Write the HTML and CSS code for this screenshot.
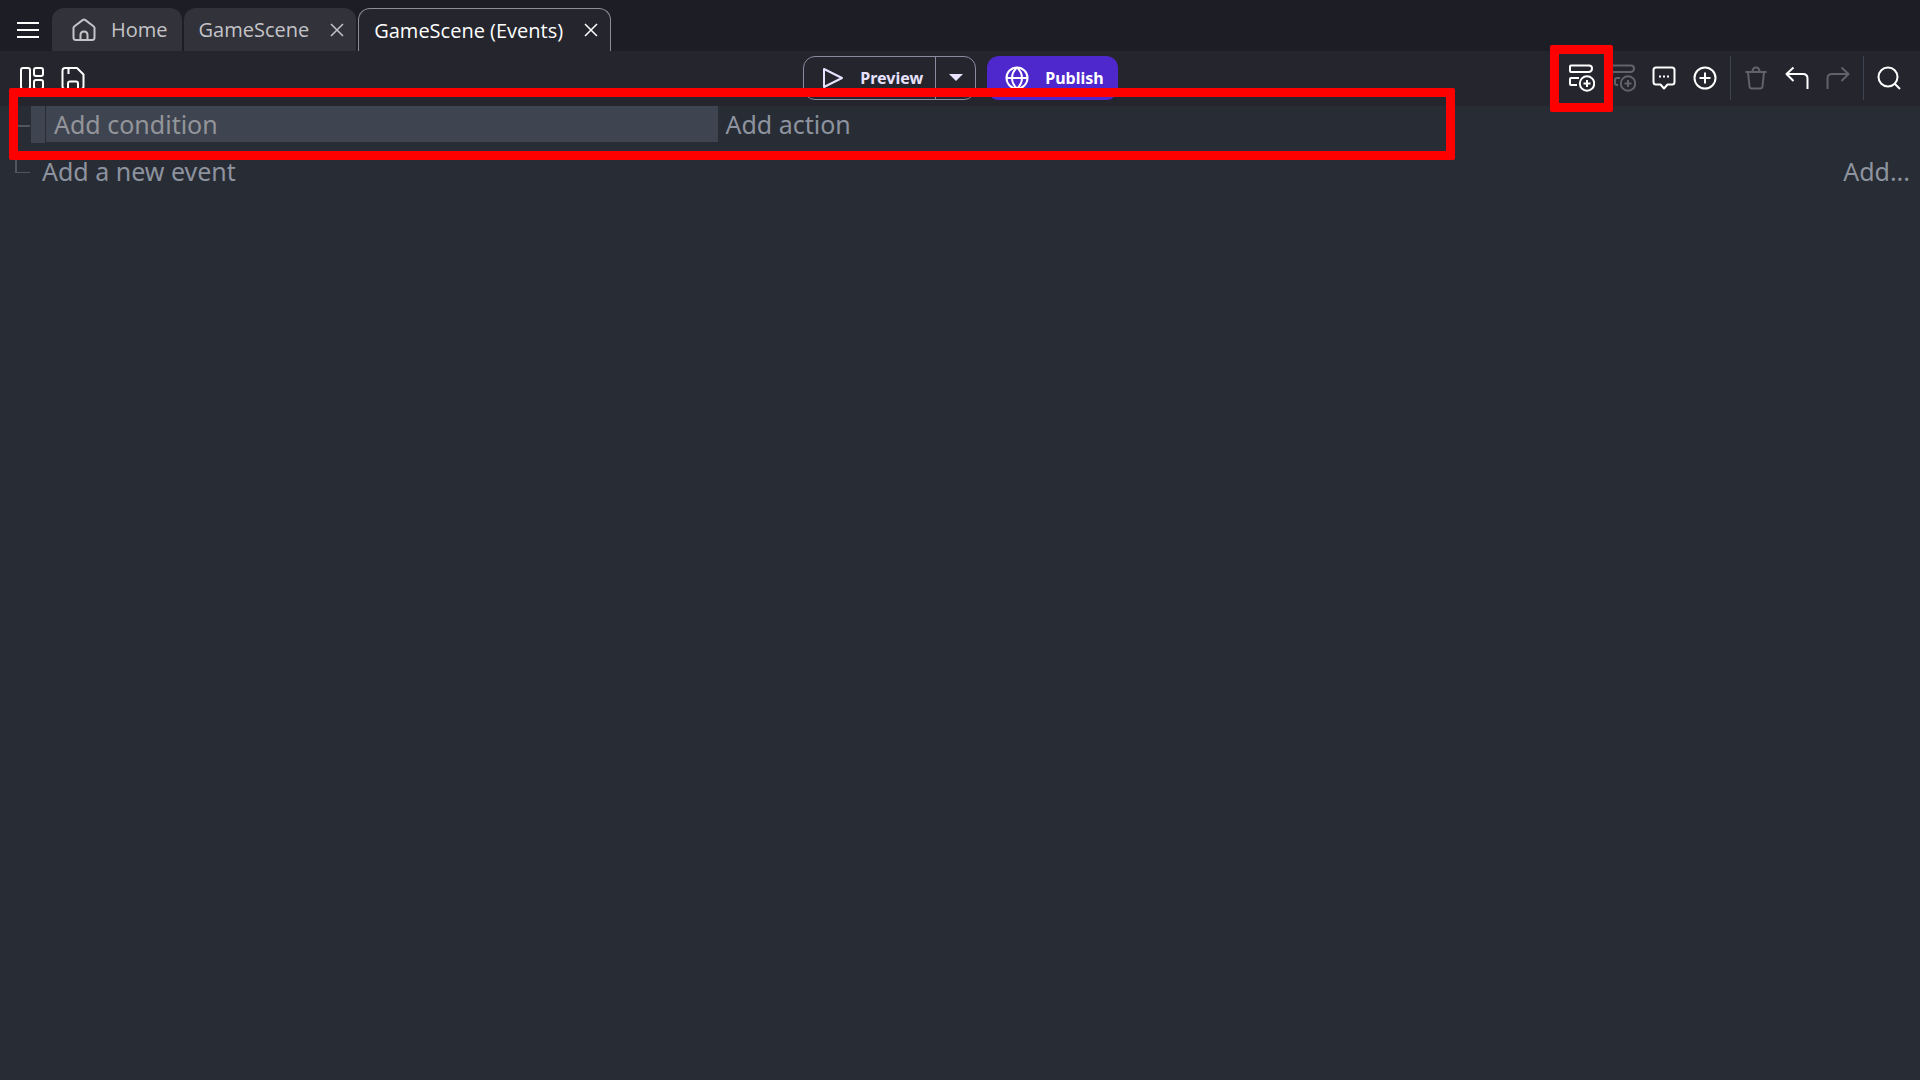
FILE: index.html
```html
<!DOCTYPE html>
<html lang="en">
<head>
  <meta charset="UTF-8">
  <meta name="viewport" content="width=device-width, initial-scale=1.0">
  <title>GameScene (Events)</title>
  <link rel="stylesheet" href="styles.css">
</head>
<body>
  <header class="titlebar">
    <button class="menu-button" aria-label="Menu">
      <svg width="24" height="18" viewBox="0 0 24 18"><path d="M1 2h22M1 9h22M1 16h22"/></svg>
    </button>
    <nav class="tabs">
      <div class="tab tab-home">
        <button class="tab-label">
          <svg width="24" height="24" viewBox="0 0 24 24"><path d="M1.500 9.800Q1.500 9 2.200 8.500L10.900 1.900Q12 1.100 13.100 1.900L21.800 8.500Q22.500 9 22.500 9.800V19.500Q22.500 22 20 22H4Q1.500 22 1.500 19.500ZM8.500 22V17Q8.500 13.500 12 13.500Q15.500 13.500 15.500 17V22"/></svg>
          Home
        </button>
      </div>
      <div class="tab">
        <button class="tab-label">GameScene</button>
        <button class="tab-close" aria-label="Close GameScene">
          <svg width="14" height="14" viewBox="0 0 14 14"><path d="M1 1l12 12M13 1L1 13"/></svg>
        </button>
      </div>
      <div class="tab active">
        <button class="tab-label">GameScene (Events)</button>
        <button class="tab-close" aria-label="Close GameScene (Events)">
          <svg width="14" height="14" viewBox="0 0 14 14"><path d="M1 1l12 12M13 1L1 13"/></svg>
        </button>
      </div>
    </nav>
  </header>

  <div class="toolbar">
    <div class="tools">
      <button class="tool" aria-label="Project manager">
        <svg width="24" height="24" viewBox="0 0 24 24"><rect x="1" y="2" width="9" height="21" rx="2"/><rect x="14" y="2" width="9" height="8" rx="2"/><rect x="14" y="14" width="9" height="9" rx="2"/></svg>
      </button>
      <button class="tool" aria-label="Save">
        <svg width="24" height="24" viewBox="0 0 24 24"><path d="M4 2H16L22.500 8.500V20.500Q22.500 23 20 23H4Q1.500 23 1.500 20.500V4.500Q1.500 2 4 2ZM7.500 2V8M7 23V17.500Q7 15.500 9 15.500H15Q17 15.500 17 17.500V23"/></svg>
      </button>
    </div>

    <div class="launch">
      <div class="preview">
        <button class="preview-main">
          <svg width="22" height="22" viewBox="0 0 22 22"><path d="M2 2V20L20 11Z"/></svg>
          Preview
        </button>
        <button class="preview-more" aria-label="Preview options">
          <svg width="14" height="8" viewBox="0 0 14 8"><path d="M0 0h14L7 7z"/></svg>
        </button>
      </div>
      <button class="publish">
        <svg width="24" height="24" viewBox="0 0 24 24"><circle cx="12" cy="12" r="10.500"/><path d="M1.500 12H22.500M12 1.500Q7 6 7 12T12 22.500Q17 18 17 12T12 1.500"/></svg>
        Publish
      </button>
    </div>

    <div class="tools tools-right">
      <button class="tool" aria-label="Add a new event">
        <svg width="26" height="28" viewBox="0 0 26 28"><path d="M2 1.500H20Q23 1.500 23 4.500T20 8H2Q1 8 1 7V2.500Q1 1.500 2 1.500ZM10 14H2Q1 14 1 15V20Q1 21 2 21H8"/><circle cx="18" cy="19.500" r="7.200"/><path d="M14.500 19.500h7M18 16v7"/></svg>
        <span class="highlight highlight-button"></span>
      </button>
      <button class="tool" disabled aria-label="Add a sub-event">
        <svg width="26" height="28" viewBox="0 0 26 28"><path d="M2 1.500H21Q24 1.500 24 4.500T21 8H2Q1 8 1 7V2.500Q1 1.500 2 1.500ZM10 14H7Q5 14 5 16V19Q5 21 7 21H8"/><circle cx="18" cy="19.500" r="7.200"/><path d="M14.500 19.500h7M18 16v7"/></svg>
      </button>
      <button class="tool" aria-label="Add a comment">
        <svg width="24" height="24" viewBox="0 0 24 24"><path d="M4 1.500H20Q22.500 1.500 22.500 4V16Q22.500 18.500 20 18.500H15.500L12 22.500L8.500 18.500H4Q1.500 18.500 1.500 16V4Q1.500 1.500 4 1.500Z"/><path d="M7 10.500h2M11 10.500h2M15 10.500h2"/></svg>
      </button>
      <button class="tool" aria-label="Choose and add an event">
        <svg width="24" height="24" viewBox="0 0 24 24"><circle cx="12" cy="12" r="10.500"/><path d="M6.500 12h11M12 6.500v11"/></svg>
      </button>
      <span class="divider"></span>
      <button class="tool" disabled aria-label="Delete">
        <svg width="24" height="24" viewBox="0 0 24 24"><path d="M1.500 6H22.500M4 6L5.500 20.500Q5.700 22.500 8 22.500H16Q18.300 22.500 18.500 20.500L20 6M8.500 6Q8.500 1.500 12 1.500Q15.500 1.500 15.500 6"/></svg>
      </button>
      <button class="tool" aria-label="Undo">
        <svg width="24" height="24" viewBox="0 0 24 24"><path d="M8.500 1.500L1.500 8L8.500 15M1.500 8H18Q22.500 8 22.500 12.500V23"/></svg>
      </button>
      <button class="tool" disabled aria-label="Redo">
        <svg width="24" height="24" viewBox="0 0 24 24"><path d="M15.500 1.500L22.500 8L15.500 15M22.500 8H6Q1.500 8 1.500 12.500V23"/></svg>
      </button>
      <span class="divider"></span>
      <button class="tool" aria-label="Search">
        <svg width="24" height="24" viewBox="0 0 24 24"><circle cx="11" cy="11" r="9.500"/><path d="M17.500 17.500L23 23"/></svg>
      </button>
    </div>
  </div>

  <main class="events">
    <div class="event">
      <span class="branch"></span>
      <span class="handle"></span>
      <div class="conditions"><button class="add">Add condition</button></div>
      <div class="actions"><button class="add">Add action</button></div>
      <span class="highlight highlight-event"></span>
    </div>
    <div class="new-event">
      <span class="branch-end"></span>
      <button class="add">Add a new event</button>
      <button class="add add-more">Add...</button>
    </div>
  </main>
</body>
</html>
```

FILE: styles.css
```css
* {
  box-sizing: border-box;
}
body {
  margin: 0;
  min-height: 100vh;
  background: #282c34;
  color: #fff;
  font-family: "Noto Sans", sans-serif;
}
button {
  display: flex;
  align-items: center;
  padding: 0;
  border: 0;
  background: none;
  color: inherit;
  font: inherit;
  cursor: pointer;
}
svg {
  display: block;
  flex: none;
  fill: none;
  stroke: currentColor;
  stroke-width: 2;
  stroke-linejoin: round;
}

/* Title bar */
.titlebar {
  display: flex;
  align-items: flex-end;
  height: 51px;
  padding-left: 16px;
  background: #1d1d26;
}
.menu-button {
  height: 43px;
  margin-right: 12px;
}
.tabs {
  display: flex;
  gap: 2px;
}
.tab {
  display: flex;
  align-items: center;
  gap: 21px;
  height: 43px;
  padding: 0 12px 0 15px;
  border-radius: 12px 12px 0 0;
  background: #32323b;
  color: #c4c4c8;
  font-family: "Open Sans", sans-serif;
  font-size: 20px;
}
.tab-home {
  padding: 0 14px 0 20px;
}
.tab-home .tab-label {
  gap: 15px;
}
.tab-close svg {
  stroke-width: 1.5;
}
.tab.active {
  border: 1px solid #8d8d94;
  border-bottom: 0;
  background: #25252e;
  color: #fff;
}

/* Toolbar */
.toolbar {
  display: grid;
  grid-template-columns: 1fr auto 1fr;
  align-items: center;
  height: 55px;
  padding: 0 19px 1px 20px;
  background: #25252e;
}
.tools {
  display: flex;
  align-items: center;
  gap: 17px;
}
.tools-right {
  justify-content: flex-end;
}
.tool {
  position: relative;
  justify-content: center;
  width: 24px;
  height: 44px;
}
.tool:disabled {
  color: #626269;
}
.divider {
  width: 1px;
  height: 44px;
  margin: 0 -4px;
  background: #3f4451;
}
.launch {
  display: flex;
  gap: 11px;
  font-size: 16px;
  font-weight: 700;
}
.preview {
  display: flex;
  height: 44px;
  border: 1px solid #8c89a0;
  border-radius: 12px;
  color: #e8e2ff;
}
.preview-main {
  gap: 16px;
  padding: 0 12px 0 18px;
}
.preview-more {
  justify-content: center;
  width: 40px;
  border-left: 1px solid #8c89a0;
}
.preview-more svg {
  fill: currentColor;
  stroke: none;
}
.publish {
  gap: 16px;
  height: 44px;
  padding: 0 14px 0 18px;
  border-radius: 12px;
  background: #4f28cd;
}

/* Events sheet */
.events {
  color: #8d939f;
  font-size: 25px;
  line-height: 36px;
}
.event {
  position: relative;
  display: flex;
  height: 47px;
  padding-left: 15px;
}
.branch {
  width: 15px;
  height: 21px;
  margin-right: 1px;
  border-bottom: 2px solid #50555e;
}
.handle {
  width: 14px;
  height: 37px;
  margin-right: 1px;
  background: #3f4451;
}
.conditions {
  width: 35.3%;
  height: 36px;
  padding-left: 8px;
  background: #3f4451;
  color: #93959a;
}
.actions {
  flex: 1;
  padding-left: 7px;
}
.new-event {
  display: flex;
  height: 36px;
  padding: 0 10px 0 15px;
}
.branch-end {
  width: 15px;
  height: 20px;
  margin-right: 12px;
  border-left: 2px solid #50555e;
  border-bottom: 1px solid #50555e;
}
.add-more {
  margin-left: auto;
}

/* Call-out frames */
.highlight {
  position: absolute;
  z-index: 1;
  border: 9px solid #f00;
  border-radius: 2px;
  pointer-events: none;
}
.highlight-event {
  top: -18px;
  bottom: -7px;
  left: 9px;
  right: 465px;
}
.highlight-button {
  top: -11px;
  bottom: -12px;
  left: -20px;
  right: -19px;
}
```
